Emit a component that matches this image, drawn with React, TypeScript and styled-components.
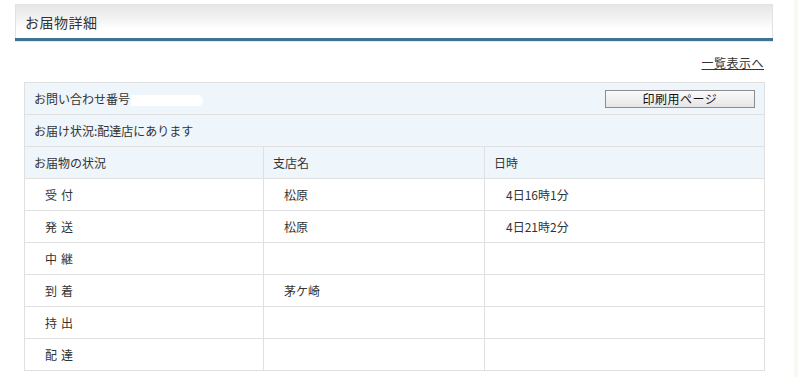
import React, { FC } from "react";
import styled, { createGlobalStyle } from "styled-components";

const GlobalStyle = createGlobalStyle`
  html, body {
    margin: 0;
    padding: 0;
    background: #faf8f3;
  }
  body {
    font-family: "Noto Sans CJK JP", "Noto Sans", sans-serif;
    font-size: 12px;
    color: #333;
  }
`;

const Page = styled.div`
  width: 794px;
  min-height: 377px;
  background: #fff;
  padding: 4px 0 0 15px;
  box-sizing: border-box;
`;

const Heading = styled.h2`
  width: 758px;
  height: 34px;
  margin: 0;
  box-sizing: border-box;
  border: 1px solid #e2e2e2;
  border-bottom: none;
  background: linear-gradient(#e6e6e6 0%, #f4f4f4 45%, #ffffff 75%);
  box-shadow: 0 3px 0 #3f7294, 0 4px 0 #dceaf2;
  display: flex;
  align-items: center;
  padding: 0 0 0 9px;
  font-size: 14px;
  font-weight: normal;
  color: #333;
  letter-spacing: 0.5px;
`;

const LinkRow = styled.div`
  width: 749px;
  display: flex;
  justify-content: flex-end;
  margin-top: 18px;
  height: 16px;
`;

const ListLink = styled.a`
  color: #333;
  text-decoration: underline;
  font-size: 12px;
  line-height: 14px;
  letter-spacing: 0.5px;
  cursor: pointer;
`;

const Table = styled.table`
  margin: 10px 0 0 9px;
  width: 740px;
  border-collapse: collapse;
  table-layout: fixed;
`;

const Cell = styled.td<{ $head?: boolean; $indent?: number }>`
  height: 32px;
  box-sizing: border-box;
  border: 1px solid #e0e0e0;
  background: ${(p) => (p.$head ? "#eef5fb" : "#fff")};
  padding: 0 0 0 ${(p) => p.$indent ?? 9}px;
  font-size: 12px;
  color: #333;
  vertical-align: middle;
  white-space: nowrap;
`;

const Step = styled.span`
  letter-spacing: 4px;
`;

const Redacted = styled.span`
  display: inline-block;
  width: 72px;
  height: 11px;
  background: #fff;
  border-radius: 0 6px 6px 0;
  vertical-align: middle;
  margin-left: 1px;
`;

const HeadInner = styled.div`
  display: flex;
  align-items: center;
  justify-content: space-between;
  padding-right: 9px;
`;

const PrintButton = styled.button`
  width: 150px;
  height: 18px;
  padding: 0;
  border: 1px solid #8c8c8c;
  background: linear-gradient(#fafafa, #e6e6e6);
  font-family: "Noto Sans CJK JP", sans-serif;
  font-size: 12px;
  line-height: 14px;
  color: #111;
  letter-spacing: 0.5px;
`;

type Row = { step: string; shop: string; date: string };

const rows: Row[] = [
  { step: "受付", shop: "松原", date: "4日16時1分" },
  { step: "発送", shop: "松原", date: "4日21時2分" },
  { step: "中継", shop: "", date: "" },
  { step: "到着", shop: "茅ケ崎", date: "" },
  { step: "持出", shop: "", date: "" },
  { step: "配達", shop: "", date: "" },
];

const App: FC = () => {
  return (
    <>
      <GlobalStyle />
      <Page>
        <Heading>お届物詳細</Heading>
        <LinkRow>
          <ListLink>一覧表示へ</ListLink>
        </LinkRow>
        <Table>
          <colgroup>
            <col style={{ width: 239 }} />
            <col style={{ width: 221 }} />
            <col style={{ width: 280 }} />
          </colgroup>
          <tbody>
            <tr>
              <Cell $head colSpan={3}>
                <HeadInner>
                  <span>
                    お問い合わせ番号
                    <Redacted />
                  </span>
                  <PrintButton>印刷用ページ</PrintButton>
                </HeadInner>
              </Cell>
            </tr>
            <tr>
              <Cell $head colSpan={3}>
                お届け状況:配達店にあります
              </Cell>
            </tr>
            <tr>
              <Cell $head>お届物の状況</Cell>
              <Cell $head>支店名</Cell>
              <Cell $head>日時</Cell>
            </tr>
            {rows.map((row, idx) => (
              <tr key={`Row_${idx}`}>
                <Cell $indent={20}>
                  <Step>{row.step}</Step>
                </Cell>
                <Cell $indent={20}>{row.shop}</Cell>
                <Cell $indent={21}>{row.date}</Cell>
              </tr>
            ))}
          </tbody>
        </Table>
      </Page>
    </>
  );
};

export default App;
